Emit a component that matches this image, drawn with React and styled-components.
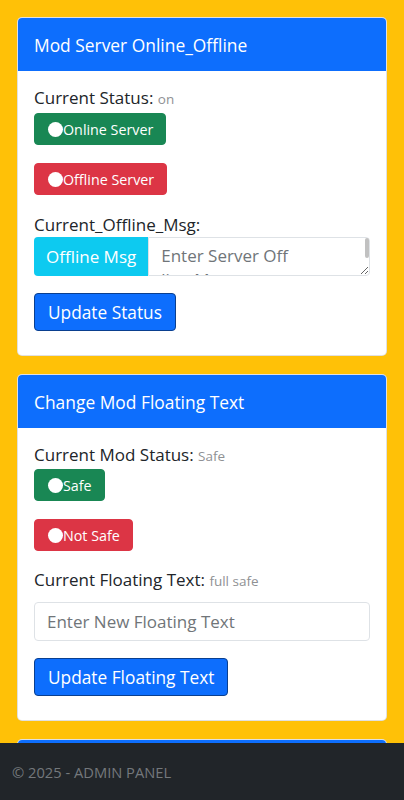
import React from 'react'
import styled, { createGlobalStyle } from 'styled-components'

const Global = createGlobalStyle`
  * { box-sizing: border-box; }
  body {
    margin: 0;
    background: #ffc107;
    font-family: "Open Sans", "Liberation Sans", sans-serif;
    color: #212529;
  }
`

const Page = styled.main`
  padding: 17px 17px 80px;
  display: flex;
  flex-direction: column;
  gap: 18px;
`

const Card = styled.section`
  background: #fff;
  border: 1px solid rgba(0, 0, 0, 0.12);
  border-radius: 5px;
  overflow: hidden;
`

const CardHeader = styled.header`
  background: #0d6efd;
  color: #fff;
  height: 53px;
  padding: 0 16px;
  display: flex;
  align-items: center;
  font-size: 17.4px;
`

const CardBody = styled.div`
  padding: 15px 16px 24px;
  display: flex;
  flex-direction: column;
  align-items: flex-start;
`

const Label = styled.div`
  font-size: 17px;
  line-height: 24px;
  margin-bottom: ${p => p.$mb || 0}px;
  span {
    font-size: 13.5px;
    color: #8f9194;
  }
`

const ToggleBtn = styled.button`
  display: flex;
  align-items: center;
  height: 32px;
  padding: 0 12px 0 13px;
  border: 1px solid ${p => p.$color};
  background: ${p => p.$color};
  color: #fff;
  border-radius: 4px;
  font-family: inherit;
  font-size: 14.3px;
  margin-bottom: ${p => p.$mb || 0}px;
`

const Dot = styled.span`
  width: 15px;
  height: 15px;
  border-radius: 50%;
  background: #fff;
`

const InputGroup = styled.div`
  position: relative;
  display: flex;
  width: 100%;
  height: 39px;
  margin-bottom: 17px;
  &::after {
    content: '';
    position: absolute;
    right: 1px;
    top: 1px;
    width: 4px;
    height: 20px;
    background: #c1c1c1;
    border-radius: 2px;
  }
`

const Addon = styled.span`
  display: flex;
  align-items: center;
  padding: 0 12px;
  background: #0dcaf0;
  color: #fff;
  font-size: 17px;
  border-radius: 4px 0 0 4px;
  white-space: nowrap;
`

const TextArea = styled.textarea`
  flex: 1;
  min-width: 0;
  border: 1px solid #dee2e6;
  border-radius: 0 4px 4px 0;
  padding: 6px 79px 6px 12px;
  font-family: inherit;
  font-size: 17px;
  line-height: 24px;
  word-break: break-all;
  resize: vertical;
  overflow: hidden;
  &::placeholder { color: #707579; }
`

const TextInput = styled.input`
  width: 100%;
  height: 39px;
  border: 1px solid #dee2e6;
  border-radius: 4px;
  padding: 0 12px;
  font-family: inherit;
  font-size: 17px;
  margin-bottom: 17px;
  &::placeholder { color: #707579; }
`

const PrimaryBtn = styled.button`
  height: 38px;
  padding: 0 13px;
  background: #0d6efd;
  color: #fff;
  border: 1px solid #0a3f8f;
  border-radius: 4px;
  font-family: inherit;
  font-size: 17.3px;
`

const Footer = styled.footer`
  position: fixed;
  left: 0;
  right: 0;
  bottom: 0;
  height: 57px;
  background: #212529;
  color: #74787c;
  display: flex;
  align-items: center;
  padding: 0 12px;
  font-size: 14.7px;
`

const App = () => (
  <>
    <Global />
    <Page>
      <Card>
        <CardHeader>Mod Server Online_Offline</CardHeader>
        <CardBody>
          <Label $mb={2}>Current Status: <span>on</span></Label>
          <ToggleBtn $color="#198754" $mb={18}><Dot />Online Server</ToggleBtn>
          <ToggleBtn $color="#dc3545" $mb={18}><Dot />Offline Server</ToggleBtn>
          <Label>Current_Offline_Msg:</Label>
          <InputGroup>
            <Addon>Offline Msg</Addon>
            <TextArea rows={1} placeholder="Enter Server Offline Msg" />
          </InputGroup>
          <PrimaryBtn>Update Status</PrimaryBtn>
        </CardBody>
      </Card>
      <Card>
        <CardHeader>Change Mod Floating Text</CardHeader>
        <CardBody>
          <Label $mb={1}>Current Mod Status: <span>Safe</span></Label>
          <ToggleBtn $color="#198754" $mb={18}><Dot />Safe</ToggleBtn>
          <ToggleBtn $color="#dc3545" $mb={17}><Dot />Not Safe</ToggleBtn>
          <Label $mb={9}>Current Floating Text: <span>full safe</span></Label>
          <TextInput placeholder="Enter New Floating Text" />
          <PrimaryBtn>Update Floating Text</PrimaryBtn>
        </CardBody>
      </Card>
      <Card>
        <CardHeader />
        <CardBody />
      </Card>
    </Page>
    <Footer>© 2025 - ADMIN PANEL</Footer>
  </>
)

export default App
